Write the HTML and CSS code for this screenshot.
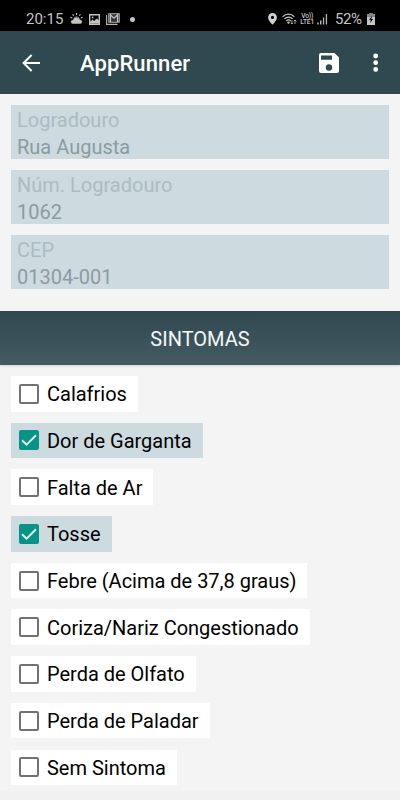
FILE: index.html
```html
<!DOCTYPE html>
<html lang="pt-BR">
<head>
    <meta charset="UTF-8">
    <meta name="viewport" content="width=device-width, initial-scale=1.0">
    <title>AppRunner</title>
    <link rel="stylesheet" href="styles.css">
</head>
<body>

<div class="status-bar">
    <span class="clock">20:15</span>
    <svg class="weather" width="13" height="12" viewBox="0 0 13 12">
        <path d="M6.5 0v2M2.6 1.2l1.1 1.6M10.4 1.2L9.3 2.8M.4 4.2l1.8.7M12.6 4.2l-1.8.7" stroke="#c4c4c4" stroke-width="1.1"/>
        <path d="M3.4 6a3.2 3.2 0 0 1 6.2 0" fill="#c4c4c4"/>
        <path d="M2.8 11a2.1 2.1 0 0 1 0-4.2A3.8 3.8 0 0 1 10 6.6a2.2 2.2 0 0 1 .2 4.4z" fill="#c4c4c4" stroke="#000" stroke-width=".5"/>
    </svg>
    <svg class="picture" width="11" height="11" viewBox="0 0 11 11">
        <path d="M.7.7h9.6v9.6H.7z" fill="none" stroke="#c4c4c4" stroke-width="1.4"/>
        <path d="M1 9.500V8l2.500-2.500L5 7l3-2.500 2 2v3z" fill="#c4c4c4"/>
        <circle cx="3.6" cy="3.4" r=".9" fill="#c4c4c4"/>
    </svg>
    <svg class="mail" width="14" height="12" viewBox="0 0 14 12">
        <path d="M.6 2v9.400h10.900" fill="none" stroke="#b4b4b4" stroke-width="1.1"/>
        <path d="M2.800.7h10.400v8.600H2.800z" fill="#333" stroke="#b4b4b4" stroke-width="1.1"/>
        <path d="M4.500 9V2L8 5.300 11.500 2v7" fill="none" stroke="#c4c4c4" stroke-width="1.2"/>
    </svg>
    <span class="more-dot"></span>
    <div class="status-right">
        <svg class="pin" width="9" height="12" viewBox="0 0 9 12">
            <path fill-rule="evenodd" d="M4.500 0A4.400 4.400 0 0 0 .1 4.400C.1 7.500 4.500 11.500 4.500 11.500s4.400-4 4.400-7.100A4.400 4.400 0 0 0 4.500 0zm0 2.800a1.600 1.600 0 1 1 0 3.200 1.600 1.600 0 0 1 0-3.200z" fill="#d0d0d0"/>
        </svg>
        <svg class="wifi" width="15" height="12" viewBox="0 0 15 12">
            <path d="M.6 3.800a8 8 0 0 1 11.800 0M2.400 5.900a5.600 5.600 0 0 1 8.200 0M4.300 8a3.200 3.200 0 0 1 4.400 0" fill="none" stroke="#c4c4c4" stroke-width="1.200"/>
            <circle cx="6.500" cy="9.600" r="1.200" fill="#c4c4c4"/>
            <path d="M9.900 7v4M8.700 9.800l1.200 1.200 1.200-1.200M13 11V7M11.800 8.200L13 7l1.200 1.200" fill="none" stroke="#c4c4c4" stroke-width=".8"/>
        </svg>
        <span class="volte"><span>Vo))</span><span>LTE1</span></span>
        <svg class="signal" width="11" height="12" viewBox="0 0 11 12">
            <path d="M.2 9.500h1.500v2H.2zM3 7.500h1.500v4H3zM5.900 4.500h1.300v7H5.900zM8.800 1h1.300v10.500H8.800z" fill="#b4b4b4"/>
        </svg>
        <span class="percent">52%</span>
        <svg class="battery" width="8" height="12" viewBox="0 0 8 12">
            <path d="M2.500 0h3v1.200H8V12H0V1.200h2.500z" fill="#c4c4c4"/>
            <path d="M0 1.200h2.500V0h3v1.200H8V4H0z" fill="#858585"/>
            <path d="M5.200 2.800L2 6.800h1.800L3 10l3.200-4H4.300z" fill="#000"/>
        </svg>
    </div>
</div>

<header class="app-bar">
    <svg class="back" width="20" height="20" viewBox="0 0 20 20">
        <path d="M19 10H3M10.600 2L2.600 10l8 8" fill="none" stroke="#fff" stroke-width="2"/>
    </svg>
    <h1>AppRunner</h1>
    <svg class="save" width="22" height="22" viewBox="0 0 22 22">
        <path fill-rule="evenodd" d="M3 1h13.500L21 5.500V19a2 2 0 0 1-2 2H3a2 2 0 0 1-2-2V3a2 2 0 0 1 2-2zm0 2.600v4.200h11V3.600zM11 12.300a3.200 3.200 0 1 0 0 6.400 3.200 3.200 0 0 0 0-6.400z" fill="#fff"/>
    </svg>
    <svg class="menu" width="6" height="20" viewBox="0 0 6 20">
        <circle cx="2.700" cy="3" r="2.400" fill="#fff"/>
        <circle cx="2.700" cy="9.700" r="2.400" fill="#fff"/>
        <circle cx="2.700" cy="16.400" r="2.400" fill="#fff"/>
    </svg>
</header>

<section class="address">
    <div class="field">
        <span class="field-label">Logradouro</span>
        <span class="field-value">Rua Augusta</span>
    </div>
    <div class="field">
        <span class="field-label">Núm. Logradouro</span>
        <span class="field-value">1062</span>
    </div>
    <div class="field">
        <span class="field-label">CEP</span>
        <span class="field-value">01304-001</span>
    </div>
</section>

<h2 class="section-title">SINTOMAS</h2>

<form class="symptoms">
    <label class="symptom"><input type="checkbox"><span>Calafrios</span></label>
    <label class="symptom checked"><input type="checkbox" checked><svg class="tick" width="20" height="20" viewBox="0 0 20 20"><path d="M3 10.200l4.600 4.500L17 5.200"/></svg><span>Dor de Garganta</span></label>
    <label class="symptom"><input type="checkbox"><span>Falta de Ar</span></label>
    <label class="symptom checked"><input type="checkbox" checked><svg class="tick" width="20" height="20" viewBox="0 0 20 20"><path d="M3 10.200l4.600 4.500L17 5.200"/></svg><span>Tosse</span></label>
    <label class="symptom"><input type="checkbox"><span>Febre (Acima de 37,8 graus)</span></label>
    <label class="symptom"><input type="checkbox"><span>Coriza/Nariz Congestionado</span></label>
    <label class="symptom"><input type="checkbox"><span>Perda de Olfato</span></label>
    <label class="symptom"><input type="checkbox"><span>Perda de Paladar</span></label>
    <label class="symptom"><input type="checkbox"><span>Sem Sintoma</span></label>
</form>

</body>
</html>
```
FILE: styles.css
```css
* {
    box-sizing: border-box;
}

body {
    margin: 0;
    height: 800px;
    overflow: hidden;
    background: #f1f1f1;
    font-family: Roboto, "Liberation Sans", sans-serif;
    color: #000;
}

.status-bar {
    display: flex;
    align-items: center;
    height: 31px;
    padding: 7px 25px 0 26px;
    background: #000;
    color: #c4c4c4;
}

.clock {
    width: 44px;
    font-size: 15px;
    line-height: 24px;
}

.picture {
    margin-left: 6px;
}

.mail {
    margin-left: 6px;
}

.more-dot {
    width: 5px;
    height: 5px;
    margin-left: 10px;
    border-radius: 50%;
    background: #c4c4c4;
}

.status-right {
    display: flex;
    align-items: center;
    margin-left: auto;
}

.wifi {
    margin-left: 5px;
}

.volte {
    display: flex;
    flex-direction: column;
    align-items: center;
    width: 15px;
    margin-left: 3px;
    font-size: 7px;
    font-weight: 500;
    line-height: 6.5px;
    letter-spacing: -0.2px;
}

.volte span {
    height: 6.5px;
    transform: scaleX(0.95);
}

.signal {
    margin-left: 2px;
}

.percent {
    width: 28px;
    margin: 0 4px 0 7px;
    font-size: 15px;
    letter-spacing: -0.4px;
}

.app-bar {
    display: flex;
    align-items: center;
    height: 63px;
    padding: 0 21px;
    background: #304850;
    color: #fff;
}

.app-bar h1 {
    margin: 2px 0 0 39px;
    font-size: 22px;
    font-weight: 500;
    letter-spacing: 0.1px;
}

.save {
    margin-left: auto;
}

.menu {
    margin: 0 0 0 33px;
}

.address {
    display: flex;
    flex-direction: column;
    gap: 11px;
    padding: 11px 11px 22px;
    background: #f4f4f4;
}

.field {
    display: flex;
    flex-direction: column;
    height: 54px;
    padding: 2px 6px 0;
    background: #cddae0;
    font-size: 20px;
    line-height: 27px;
}

.field-label {
    color: #acbcc2;
}

.field-value {
    color: #8c9c9f;
}

.section-title {
    position: relative;
    height: 54px;
    margin: 0;
    background: linear-gradient(#304850, #455a62);
    color: #f4f8fa;
    font-size: 20px;
    font-weight: 400;
    line-height: 56px;
    text-align: center;
    box-shadow: 0 1px 2px #cdd5d9;
}

.symptoms {
    display: flex;
    flex-direction: column;
    align-items: flex-start;
    gap: 11.1px;
    height: 426px;
    padding: 11px 11px 0;
    background: #f4f4f4;
}

.symptom {
    position: relative;
    display: flex;
    align-items: center;
    flex-shrink: 0;
    height: 35.6px;
    padding: 1px 11px 0 8px;
    background: #fff;
    font-size: 20px;
    letter-spacing: -0.01px;
    white-space: nowrap;
}

.symptom.checked {
    background: #cddae0;
}

.symptom input {
    appearance: none;
    width: 20px;
    height: 20px;
    margin: -1px 8px 0 0;
    border: 2px solid #727272;
    border-radius: 2px;
}

.symptom input:checked {
    border-color: #079486;
    background: #079486;
}

/* tick lies over the checkbox */
.tick {
    position: absolute;
    top: 7.8px;
    left: 8px;
    fill: none;
    stroke: #dcefee;
    stroke-width: 2;
}
```
